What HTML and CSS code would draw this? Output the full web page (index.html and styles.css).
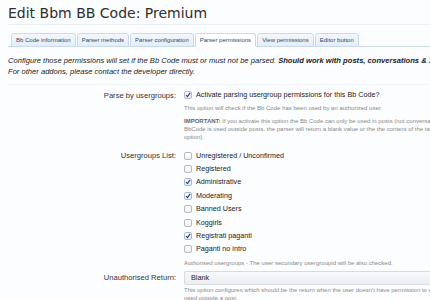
FILE: index.html
```html
<!DOCTYPE html>
<html lang="en">
<head>
  <meta charset="UTF-8" />
  <title>Edit Bbm BB Code: Premium</title>
  <link rel="stylesheet" href="styles.css">
</head>
<body>
  <div class="page">
    <h1 class="title">Edit Bbm BB Code: Premium</h1>

    <ul class="tabs">
      <li><a href="#">Bb Code information</a></li>
      <li><a href="#">Parser methods</a></li>
      <li><a href="#">Parser configuration</a></li>
      <li class="active"><a href="#">Parser permissions</a></li>
      <li><a href="#">View permissions</a></li>
      <li><a href="#">Editor button</a></li>
    </ul>

    <p class="intro">
      Configure those permissions will set if the Bb Code must or must not be parsed. <b>Should work with posts, conversations &amp; XenForo profile posts.</b><br>
      For other addons, please contact the developer directly.
    </p>

    <div class="form">
      <!-- Parse by usergroups -->
      <div class="row">
        <div class="label">Parse by usergroups:</div>
        <div class="ctrl">
          <label class="check"><span class="box on"><svg viewBox="0 0 8 8"><path d="M1.5 4.2 L3.3 6.2 L6.8 1.2" /></svg></span>Activate parsing usergroup permissions for this Bb Code?</label>
          <p class="explain">This option will check if the Bb Code has been used by an authorized user.</p>
          <p class="explain"><b>IMPORTANT:</b> If you activate this option the Bb Code can only be used in posts (not conversations, signatures...). If the<br>BbCode is used outside posts, the parser will return a blank value or the the content of the tag (see the next<br>option).</p>
        </div>
      </div>

      <!-- Usergroups -->
      <div class="row">
        <div class="label">Usergroups List:</div>
        <div class="ctrl">
          <ul class="checklist">
            <li><label class="check"><span class="box"></span>Unregistered / Unconfirmed</label></li>
            <li><label class="check"><span class="box"></span>Registered</label></li>
            <li><label class="check"><span class="box on"><svg viewBox="0 0 8 8"><path d="M1.5 4.2 L3.3 6.2 L6.8 1.2" /></svg></span>Administrative</label></li>
            <li><label class="check"><span class="box on"><svg viewBox="0 0 8 8"><path d="M1.5 4.2 L3.3 6.2 L6.8 1.2" /></svg></span>Moderating</label></li>
            <li><label class="check"><span class="box"></span>Banned Users</label></li>
            <li><label class="check"><span class="box"></span>Koggirls</label></li>
            <li><label class="check"><span class="box on"><svg viewBox="0 0 8 8"><path d="M1.5 4.2 L3.3 6.2 L6.8 1.2" /></svg></span>Registrati paganti</label></li>
            <li><label class="check"><span class="box"></span>Paganti no intro</label></li>
          </ul>
          <p class="explain last">Authorised usergroups - The user secondary usergroupid will be also checked.</p>
        </div>
      </div>

      <!-- Unauthorised return -->
      <div class="row">
        <div class="label label-select">Unauthorised Return:</div>
        <div class="ctrl">
          <div class="select">Blank</div>
          <p class="explain tight">This option configures which should be the return when the user doesn't have permission to use the Bb Code or if the Bb Code is<br>used outside a post.</p>
        </div>
      </div>
    </div>
  </div>
</body>
</html>
```

FILE: styles.css
```css
* {
  box-sizing: border-box;
}

html, body {
  margin: 0;
  padding: 0;
  background: #fcfdff;
  color: #222;
  font-family: 'Liberation Sans', Arial, sans-serif;
  font-size: 7.5px;
  line-height: 1.4;
  overflow: hidden;
}

.page {
  width: 700px;
  padding: 5px 0 0 8px;
}

.title {
  margin: 0 -8px 0 0;
  font-family: 'DejaVu Sans', Verdana, sans-serif;
  font-weight: normal;
  font-size: 14px;
  line-height: 16px;
  color: #2e2e2e;
  padding-bottom: 3px;
  border-bottom: 1px solid #eaf0f7;
}

/* Tabs */
.tabs {
  list-style: none;
  margin: 8px -8px 0 0;
  padding: 0 0 0 3px;
  display: flex;
  gap: 1px;
  border-bottom: 1px solid #cbdaea;
}
.tabs li {
  margin-bottom: -1px;
}
.tabs a {
  display: block;
  height: 14px;
  line-height: 13px;
  padding: 0 4px;
  font-size: 6px;
  color: #2f4a63;
  text-decoration: none;
  background: linear-gradient(#f3f7fc, #e5edf7);
  border: 1px solid #cbdaea;
  border-radius: 3px 3px 0 0;
}
.tabs .active a {
  background: #fff;
  border-bottom-color: #fff;
}

/* Intro */
.intro {
  margin: 8px -8px 0 0;
  font-style: italic;
  font-size: 7.6px;
  line-height: 11px;
  color: #222;
  white-space: nowrap;
  padding-bottom: 7px;
  border-bottom: 1px solid #eef2f7;
}

/* Form */
.form {
  padding-top: 4px;
}
.row {
  display: grid;
  grid-template-columns: 168px 1fr;
  column-gap: 8px;
  margin-bottom: 3px;
}
.label {
  text-align: right;
  font-size: 7.6px;
  line-height: 13px;
  color: #333;
}
.label-select {
  line-height: 14px;
}
.ctrl {
  min-width: 0;
}

.check {
  display: flex;
  align-items: center;
  gap: 4px;
  height: 12px;
  font-size: 7.2px;
  color: #222;
  white-space: nowrap;
}
.box {
  flex: none;
  width: 8px;
  height: 8px;
  border: 1px solid #b3b9c2;
  border-radius: 2px;
  background: linear-gradient(#ffffff, #eef0f3);
  display: flex;
}
.box svg {
  width: 8px;
  height: 8px;
  margin: -1px 0 0 0;
  fill: none;
  stroke: #1e3f93;
  stroke-width: 1.6;
}

.checklist {
  list-style: none;
  margin: 0;
  padding: 0;
}
.checklist li {
  height: 13.4px;
  display: flex;
  align-items: center;
}

.explain {
  margin: 3px 0 5px 0;
  font-size: 6px;
  line-height: 8px;
  color: #8a8a8a;
  white-space: nowrap;
}
.explain b {
  color: #666;
}
.explain.last {
  margin-bottom: 1px;
}
.explain.tight {
  margin-top: 1px;
}

.select {
  width: 300px;
  height: 14px;
  line-height: 12px;
  padding: 0 6px;
  font-size: 7.2px;
  color: #222;
  border: 1px solid #d4dbe3;
  border-radius: 2px;
  background: linear-gradient(#f7f8fa, #eceef1);
}
```
